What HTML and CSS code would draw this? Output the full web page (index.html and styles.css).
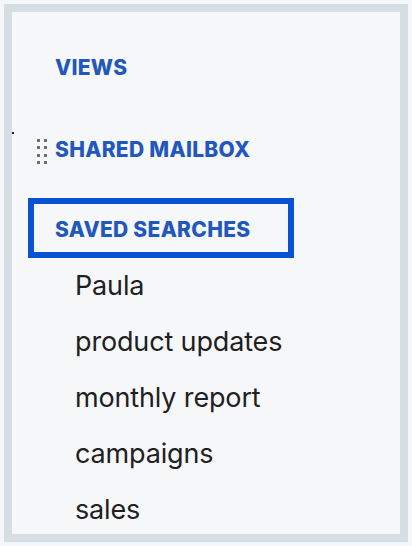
FILE: index.html
```html
<!DOCTYPE html>
<html>
<head>
<meta charset="utf-8">
<link rel="stylesheet" href="styles.css">
</head>
<body>
<div class="frame">
  <span class="speck"></span>
  <div class="heading views">VIEWS</div>
  <div class="heading shared">
    <svg class="grip" width="10" height="26" viewBox="0 0 10 26">
      <rect x="0" y="0" width="3" height="3" fill="#6f6f6f"/>
      <rect x="7" y="0" width="3" height="3" fill="#6f6f6f"/>
      <rect x="0" y="7" width="3" height="3" fill="#6f6f6f"/>
      <rect x="7" y="7" width="3" height="3" fill="#6f6f6f"/>
      <rect x="0" y="15" width="3" height="3" fill="#6f6f6f"/>
      <rect x="7" y="15" width="3" height="3" fill="#6f6f6f"/>
      <rect x="0" y="22" width="3" height="3" fill="#6f6f6f"/>
      <rect x="7" y="22" width="3" height="3" fill="#6f6f6f"/>
    </svg>
    <span>SHARED MAILBOX</span>
  </div>
  <div class="saved-box">
    <div class="heading">SAVED SEARCHES</div>
  </div>
  <ul class="list">
    <li>Paula</li>
    <li>product updates</li>
    <li>monthly report</li>
    <li>campaigns</li>
    <li>sales</li>
  </ul>
</div>
</body>
</html>
```
FILE: styles.css
```css
html, body {
  margin: 0;
  padding: 0;
  background: #f4f6f7;
}
body {
  width: 412px;
  height: 546px;
  overflow: hidden;
  font-family: Inter, "Noto Sans", sans-serif;
}
.frame {
  position: relative;
  margin: 4px;
  height: 522px;
  border: 8px solid #d5dee3;
  background: #f6f7f9;
  box-sizing: content-box;
}
.speck {
  position: absolute;
  left: 0;
  top: 120px;
  width: 2px;
  height: 2px;
  background: #222;
}
.heading {
  color: #2257bd;
  font-weight: 800;
  font-size: 21px;
  line-height: 20px;
  letter-spacing: 0.3px;
}
.views {
  margin-top: 46px;
  padding-left: 43px;
}
.shared {
  margin-top: 62px;
  padding-left: 25px;
  display: flex;
  align-items: center;
  gap: 8px;
  height: 20px;
}
.grip {
  display: block;
  margin-top: 4px;
}
.saved-box {
  margin: 38px 0 0 16px;
  width: 266px;
  height: 60px;
  box-sizing: border-box;
  border: 6px solid #0a52d4;
  padding: 16px 0 0 21px;
}
.list {
  list-style: none;
  margin: 0;
  padding: 0 0 0 63px;
}
.list li {
  font-size: 27px;
  line-height: 56px;
  letter-spacing: -0.15px;
  color: #1f2022;
}
```
